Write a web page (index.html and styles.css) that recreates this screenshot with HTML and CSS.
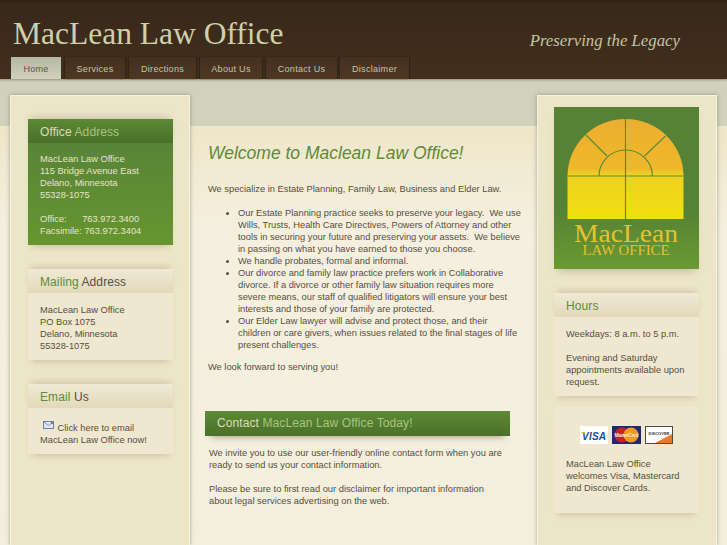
FILE: index.html
```html
<!DOCTYPE html>
<html lang="en">
<head>
    <meta charset="UTF-8">
    <meta name="viewport" content="width=device-width, initial-scale=1.0">
    <title>MacLean Law Office</title>
    <link rel="stylesheet" href="styles.css">
</head>
<body>
<div class="page">
    <header class="header">
        <div class="brand">
            <div class="site-name">MacLean Law Office</div>
            <div class="tagline">Preserving the Legacy</div>
        </div>
        <nav class="nav">
            <a class="tab tab-home active" href="#">Home</a>
            <a class="tab tab-services" href="#">Services</a>
            <a class="tab tab-directions" href="#">Directions</a>
            <a class="tab tab-about" href="#">About Us</a>
            <a class="tab tab-contact" href="#">Contact Us</a>
            <a class="tab tab-disclaimer" href="#">Disclaimer</a>
        </nav>
    </header>

    <main class="main">
        <aside class="sidebar sidebar-left">
            <section class="box box-green box-office">
                <h3 class="box-head">Office <span>Address</span></h3>
                <div class="box-body">
                    MacLean Law Office<br>
                    115 Bridge Avenue East<br>
                    Delano, Minnesota<br>
                    55328-1075<br>
                    <br>
                    Office: &nbsp; &nbsp; &nbsp;763.972.3400<br>
                    Facsimile: 763.972.3404
                </div>
            </section>
            <section class="box box-mailing">
                <h3 class="box-head"><span>Mailing</span> Address</h3>
                <div class="box-body">
                    MacLean Law Office<br>
                    PO Box 1075<br>
                    Delano, Minnesota<br>
                    55328-1075
                </div>
            </section>
            <section class="box box-email">
                <h3 class="box-head"><span>Email</span> Us</h3>
                <div class="box-body">
                    <svg class="mail-icon" width="11" height="8" viewBox="0 0 11 8">
                        <rect x="0.5" y="0.5" width="10" height="7" fill="#dfe6f2" stroke="#6a83ad"/>
                        <path d="M1 1l4.5 3.5L10 1" fill="none" stroke="#7f97bf"/>
                        <rect x="8" y="1" width="2" height="2" fill="#c9604a"/>
                    </svg>
                    Click here to email<br>
                    MacLean Law Office now!
                </div>
            </section>
        </aside>

        <div class="content">
            <h1 class="welcome">Welcome to Maclean Law Office!</h1>
            <p class="intro">We specialize in Estate Planning, Family Law, Business and Elder Law.</p>
            <ul class="services">
                <li>Our Estate Planning practice seeks to preserve your legacy.&nbsp; We use Wills, Trusts, Health Care Directives, Powers of Attorney and other tools in securing your future and preserving your assets.&nbsp; We believe in passing on what you have earned to those you choose.</li>
                <li>We handle probates, formal and informal.</li>
                <li>Our divorce and family law practice prefers work in Collaborative divorce. If a divorce or other family law situation requires more severe means, our staff of qualified litigators will ensure your best interests and those of your family are protected.</li>
                <li>Our Elder Law lawyer will advise and protect those, and their children or care givers, when issues related to the final stages of life present challenges.</li>
            </ul>
            <p class="closing">We look forward to serving you!</p>

            <h2 class="contact-bar">Contact <span>MacLean Law Office Today!</span></h2>
            <div class="contact-text">
                <p>We invite you to use our user-friendly online contact form when you are ready to send us your contact information.</p>
                <p>Please be sure to first read our disclaimer for important information about legal services advertising on the web.</p>
            </div>
        </div>

        <aside class="sidebar sidebar-right">
            <svg class="logo" width="145" height="162" viewBox="0 0 145 162">
                <defs>
                    <linearGradient id="logoBg" x1="0" y1="0" x2="0" y2="1">
                        <stop offset="0.65" stop-color="#568235"/>
                        <stop offset="1" stop-color="#6a9a30"/>
                    </linearGradient>
                    <linearGradient id="logoGlass" x1="0" y1="0" x2="0" y2="1">
                        <stop offset="0" stop-color="#ecae30"/>
                        <stop offset="0.5" stop-color="#eeb82a"/>
                        <stop offset="0.55" stop-color="#efd021"/>
                        <stop offset="1" stop-color="#f0e010"/>
                    </linearGradient>
                </defs>
                <rect width="145" height="162" fill="url(#logoBg)"/>
                <path d="M13.5 112V69a58 57 0 0 1 116 0V112Z" fill="url(#logoGlass)"/>
                <g fill="none" stroke="#5d8a3a" stroke-width="1.2">
                    <path d="M71.5 12V112"/>
                    <path d="M13.5 69H129.5"/>
                    <path d="M45 69a26.7 26 0 0 1 53.4 0"/>
                    <path d="M32 28L53 49"/>
                    <path d="M111.500 29L90.500 49"/>
                </g>
                <text class="logo-name" x="72" y="135" text-anchor="middle" textLength="104" lengthAdjust="spacingAndGlyphs">MacLean</text>
                <text class="logo-sub" x="72" y="147.500" text-anchor="middle" textLength="87" lengthAdjust="spacingAndGlyphs">LAW OFFICE</text>
            </svg>
            <section class="box box-hours">
                <h3 class="box-head"><span>Hours</span></h3>
                <div class="box-body">
                    Weekdays: 8 a.m. to 5 p.m.<br>
                    <br>
                    Evening and Saturday appointments available upon request.
                </div>
            </section>
            <section class="box box-cards">
                <div class="cards">
                    <svg width="28" height="18" viewBox="0 0 28 18">
                        <rect width="28" height="18" fill="#fff"/>
                        <text class="visa" x="14" y="13.500" text-anchor="middle" textLength="24">VISA</text>
                        <path d="M1 6L6 9 4 6Z" fill="#f0a020"/>
                    </svg>
                    <svg width="29" height="18" viewBox="0 0 29 18">
                        <rect width="29" height="18" fill="#1c2a72"/>
                        <circle cx="10" cy="9" r="7.500" fill="#cc1f25"/>
                        <circle cx="19" cy="9" r="7.500" fill="#f39a1e"/>
                        <text class="mc" x="14.500" y="10.500" text-anchor="middle" textLength="24">MasterCard</text>
                    </svg>
                    <svg width="28" height="18" viewBox="0 0 28 18">
                        <rect x="0.500" y="0.500" width="27" height="17" fill="#fff" stroke="#4a4a48"/>
                        <path d="M10 17L27 8V17Z" fill="#e8792b"/>
                        <text class="discover" x="14" y="8.500" text-anchor="middle" textLength="21">DISCOVER</text>
                    </svg>
                </div>
                <div class="box-body">
                    MacLean Law Office welcomes Visa, Mastercard and Discover Cards.
                </div>
            </section>
        </aside>
    </main>
</div>
</body>
</html>
```

FILE: styles.css
```css
* {
    margin: 0;
    padding: 0;
    box-sizing: border-box;
}

html, body {
    height: 100%;
    overflow: hidden;
}

body {
    font-family: "Liberation Sans", Arial, sans-serif;
    font-size: 9.300px;
    line-height: 12px;
    color: #55503f;
    background-color: #f4eedd;
}

.page {
    height: 100%;
    display: flex;
    flex-direction: column;
}

/* header */
.header {
    height: 79px;
    flex: none;
    display: flex;
    flex-direction: column;
    background: linear-gradient(#2e2114 0, #38281a 4px, #42301d 100%);
    box-shadow: 0 1px 2px rgba(90, 80, 50, 0.5);
    position: relative;
}

.brand {
    height: 57px;
    padding: 14px 47px 0 13px;
    display: flex;
    justify-content: space-between;
}

.site-name {
    font-family: "Liberation Serif", serif;
    font-size: 31.500px;
    line-height: 40px;
    color: #cfcfab;
}

.tagline {
    font-family: "Liberation Serif", serif;
    font-style: italic;
    font-size: 16.800px;
    line-height: 24px;
    margin-top: 15px;
    color: #c4c4a2;
}

.nav {
    display: flex;
    padding-left: 11px;
    gap: 4px;
}

.tab {
    height: 22px;
    line-height: 24px;
    text-align: center;
    font-size: 9px;
    letter-spacing: 0.3px;
    color: #c6c5aa;
    text-decoration: none;
    background: linear-gradient(#443020, #4e3722);
    box-shadow: -1px 0 1px rgba(30, 20, 10, 0.4), 1px 0 1px rgba(30, 20, 10, 0.4);
}

.tab.active {
    color: #5a5545;
    background: linear-gradient(#b4b7a3, #d0d2bb);
    box-shadow: none;
}

.tab-home { width: 50px; }
.tab-services { width: 60px; }
.tab-directions { width: 67px; }
.tab-about { width: 62px; }
.tab-contact { width: 71px; }
.tab-disclaimer { width: 69px; margin-left: -1px; }

/* main columns */
.main {
    flex: 1;
    display: grid;
    grid-template-columns: 180px 347px 180px;
    padding: 16px 10px 0;
    min-height: 0;
    background: linear-gradient(#d0d2bb 0, #d0d2bb 47px, #efe6c8 47px, #f5efdf 150px, #f4eedd 100%);
}

.sidebar {
    background: #ede5c8;
    border: 1px solid #f7f3e4;
    border-bottom: none;
    box-shadow: 0 0 4px rgba(90, 90, 70, 0.5);
    padding-top: 11px;
    display: flex;
    flex-direction: column;
}

.sidebar-left {
    padding-left: 17px;
    padding-right: 16px;
}

.sidebar-right {
    padding-left: 16px;
    padding-right: 17px;
}

.box {
    background: #efe7cf;
    box-shadow: 0 6px 6px -4px rgba(120, 105, 70, 0.25);
    margin-bottom: 23px;
    position: relative;
}

.box-head {
    height: 24px;
    padding-left: 12px;
    font-size: 12px;
    font-weight: normal;
    letter-spacing: 0.1px;
    line-height: 26px;
    color: #55503f;
    background: linear-gradient(#f0e9d4, #e2d9bb);
    box-shadow: 0 -5px 6px -3px rgba(120, 105, 70, 0.25);
}

.box-head span {
    color: #5f8a38;
}

.box-body {
    padding: 9px 12px 8px;
    margin-top: 2px;
}

.box-office {
    margin-top: 12px;
    margin-bottom: 24px;
}

.box-green {
    background: linear-gradient(#56803a, #66952f);
    color: #e6e4c6;
}

.box-green .box-head {
    color: #dcdcbc;
    background: linear-gradient(#5d8a35, #4a7029);
}

.box-green .box-head span {
    color: #a8c47e;
}

.box-green .box-body {
    margin-top: 0;
    padding-top: 10px;
}

.box-mailing {
    margin-bottom: 24px;
}

.box-email .box-body {
    padding-top: 11px;
}

.mail-icon {
    margin-left: 3px;
    margin-right: 1px;
    vertical-align: 2px;
}

/* logo and cards */
.logo {
    flex: none;
    display: block;
    margin-bottom: 24px;
    box-shadow: 0 6px 8px -4px rgba(120, 105, 70, 0.35);
}

.logo-name {
    font-family: "Liberation Serif", serif;
    font-size: 26px;
    fill: #e8c030;
}

.logo-sub {
    font-family: "Liberation Serif", serif;
    font-size: 14px;
    fill: #e8c030;
}

.box-hours {
    margin-bottom: 11px;
}

.box-cards {
    padding-top: 19px;
    margin-bottom: 0;
}

.box-cards .box-body {
    margin-top: 0;
    padding-top: 14px;
    padding-bottom: 19px;
}

.cards {
    display: flex;
    justify-content: center;
    gap: 4px;
}

.visa {
    font-family: "Liberation Sans", sans-serif;
    font-size: 10px;
    font-weight: bold;
    font-style: italic;
    fill: #1a4e96;
}

.mc {
    font-family: "Liberation Sans", sans-serif;
    font-size: 5px;
    font-weight: bold;
    fill: #f5e6d0;
}

.discover {
    font-family: "Liberation Sans", sans-serif;
    font-size: 4px;
    font-weight: bold;
    fill: #333;
}

/* centre column */
.content {
    padding: 47px 18px 0 18px;
}

.welcome {
    font-size: 17.500px;
    font-style: italic;
    font-weight: normal;
    line-height: 22px;
    color: #5f8a38;
    margin-bottom: 19px;
}

.intro {
    margin-bottom: 12px;
}

.services {
    margin-left: 30px;
    margin-right: -3px;
    margin-bottom: 10px;
}

.closing {
    margin-bottom: 38px;
}

.contact-bar {
    margin-left: -3px;
    width: 305px;
    height: 25px;
    padding-left: 12px;
    font-size: 12px;
    font-weight: normal;
    letter-spacing: 0.1px;
    line-height: 25px;
    color: #dcdcbc;
    background: linear-gradient(#5d8a35, #4a7029);
    box-shadow: 0 7px 6px -6px rgba(90, 80, 50, 0.5);
}

.contact-bar span {
    color: #a8c47e;
}

.contact-text {
    padding: 11px 16px 0 1px;
}

.contact-text p {
    margin-bottom: 12px;
}
```
